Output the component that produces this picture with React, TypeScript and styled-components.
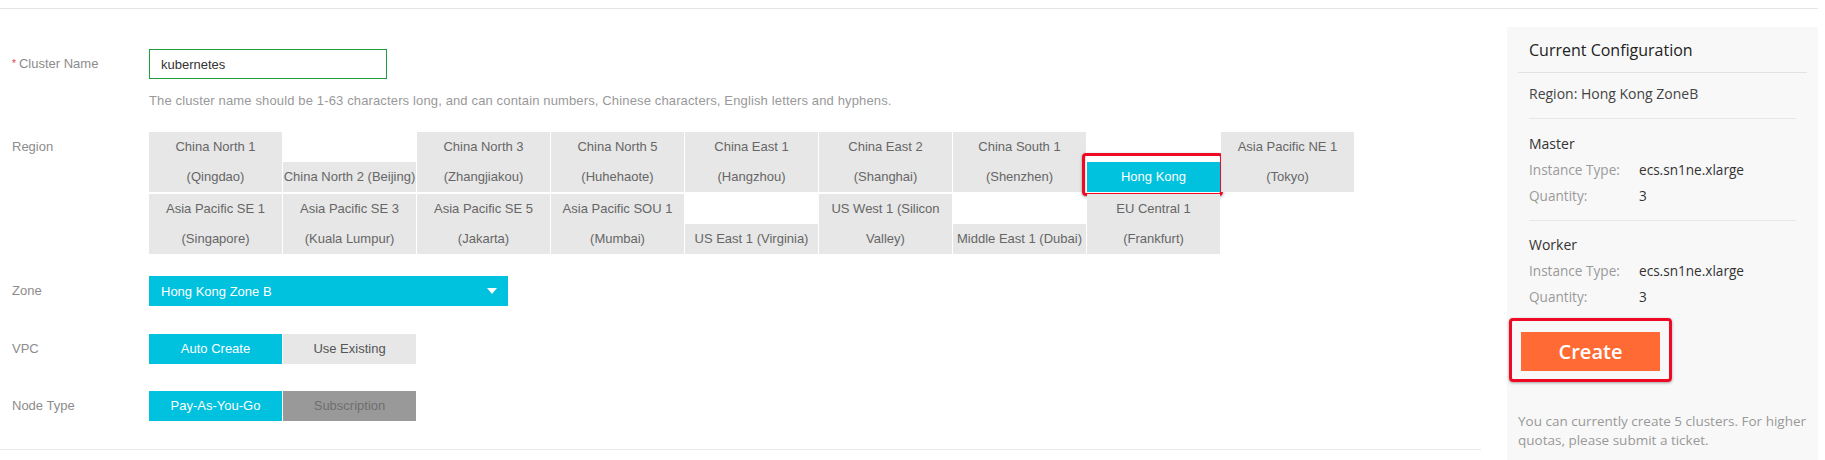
import styled, { createGlobalStyle } from "styled-components";

const GlobalStyle = createGlobalStyle`
  html, body {
    margin: 0;
    padding: 0;
    background: #fff;
  }
  body {
    font-family: "Liberation Sans", Arial, sans-serif;
    font-size: 13px;
  }
`;

const CYAN = "#00c1de";
const MARK = "#ee0a24";

type Region = { lines: string[]; active?: boolean };

const regions: Region[] = [
  { lines: ["China North 1", "(Qingdao)"] },
  { lines: ["China North 2 (Beijing)"] },
  { lines: ["China North 3", "(Zhangjiakou)"] },
  { lines: ["China North 5", "(Huhehaote)"] },
  { lines: ["China East 1", "(Hangzhou)"] },
  { lines: ["China East 2", "(Shanghai)"] },
  { lines: ["China South 1", "(Shenzhen)"] },
  { lines: ["Hong Kong"], active: true },
  { lines: ["Asia Pacific NE 1", "(Tokyo)"] },
  { lines: ["Asia Pacific SE 1", "(Singapore)"] },
  { lines: ["Asia Pacific SE 3", "(Kuala Lumpur)"] },
  { lines: ["Asia Pacific SE 5", "(Jakarta)"] },
  { lines: ["Asia Pacific SOU 1", "(Mumbai)"] },
  { lines: ["US East 1 (Virginia)"] },
  { lines: ["US West 1 (Silicon", "Valley)"] },
  { lines: ["Middle East 1 (Dubai)"] },
  { lines: ["EU Central 1", "(Frankfurt)"] },
];

const Page = styled.div`
  width: 1818px;
  padding-top: 8px;
`;

const Main = styled.div`
  display: flex;
  align-items: flex-start;
  border-top: 1px solid #e4e4e4;
`;

const Form = styled.div`
  width: 1481px;
  flex-shrink: 0;
  padding: 40px 0 28px;
  border-bottom: 1px solid #e8e8e8;
`;

const FieldRow = styled.div<{ $gap?: number }>`
  display: flex;
  align-items: flex-start;
  margin-top: ${(p) => p.$gap ?? 0}px;
`;

const Label = styled.div`
  width: 149px;
  box-sizing: border-box;
  padding-left: 12px;
  flex-shrink: 0;
  line-height: 30px;
  color: #8c8c8c;
  font-size: 13px;
`;

const Required = styled.span`
  color: #e4393c;
  font-size: 10px;
  margin-right: 3px;
  vertical-align: 1px;
`;

const Field = styled.div`
  display: flex;
  flex-direction: column;
`;

const TextInput = styled.input`
  width: 238px;
  height: 30px;
  box-sizing: border-box;
  border: 1px solid #1f9d3a;
  outline: none;
  padding: 0 11px;
  font-family: "Liberation Sans", Arial, sans-serif;
  font-size: 13px;
  color: #333;
  background: #fff;
`;

const Hint = styled.div`
  margin-top: 12px;
  line-height: 20px;
  color: #999;
  font-size: 13px;
  letter-spacing: 0.14px;
`;

const RegionGrid = styled.div`
  display: grid;
  grid-template-columns: repeat(9, 133px);
  grid-auto-rows: 60px;
  column-gap: 1px;
  row-gap: 2px;
  align-items: end;
`;

const RegionCell = styled.div<{ $active?: boolean }>`
  position: relative;
  background: ${(p) => (p.$active ? CYAN : "#e7e7e7")};
  color: ${(p) => (p.$active ? "#fff" : "#666")};
  line-height: 30px;
  text-align: center;
  font-size: 13px;
  cursor: pointer;

  ${(p) =>
    p.$active &&
    `
    &::after {
      content: "";
      position: absolute;
      top: -9px;
      left: -5px;
      right: -3px;
      bottom: -4px;
      border: 3px solid ${MARK};
      border-radius: 4px;
      box-shadow: 0 1px 3px rgba(0, 0, 0, 0.35);
      pointer-events: none;
    }
  `}
`;

const Line = styled.span`
  display: block;
  white-space: nowrap;
`;

const Select = styled.div`
  width: 359px;
  height: 30px;
  box-sizing: border-box;
  padding: 0 11px 0 12px;
  background: ${CYAN};
  color: #fff;
  display: flex;
  align-items: center;
  justify-content: space-between;
  font-size: 13px;
  cursor: pointer;
`;

const Segments = styled.div`
  display: flex;
  gap: 1px;
`;

const Segment = styled.div<{ $variant: "on" | "off" | "disabled" }>`
  width: 133px;
  height: 30px;
  line-height: 30px;
  text-align: center;
  font-size: 13px;
  background: ${(p) =>
    p.$variant === "on" ? CYAN : p.$variant === "off" ? "#e7e7e7" : "#999"};
  color: ${(p) =>
    p.$variant === "on" ? "#fff" : p.$variant === "off" ? "#555" : "#6f6f6f"};
  cursor: ${(p) => (p.$variant === "disabled" ? "not-allowed" : "pointer")};
`;

const Panel = styled.aside`
  width: 311px;
  flex-shrink: 0;
  margin: 18px 0 0 26px;
  min-height: 433px;
  background: #f8f8f8;
  font-family: "Open Sans", "Noto Sans", sans-serif;
  color: #333;
`;

const PanelHeader = styled.div`
  height: 45px;
  margin: 0 11px;
  padding-left: 11px;
  display: flex;
  align-items: center;
  border-bottom: 1px solid #e2e2e2;
  font-size: 16px;
  color: #222;
`;

const Section = styled.div<{ $top: number; $bottom: number; $last?: boolean }>`
  margin: 0 22px;
  padding: ${(p) => p.$top}px 0 ${(p) => p.$bottom}px;
  border-bottom: ${(p) => (p.$last ? "none" : "1px solid #e6e6e6")};
  font-size: 14px;
`;

const RegionLine = styled.div`
  line-height: 20px;
  color: #444;
`;

const Group = styled.div`
  line-height: 26px;
  color: #333;
`;

const Spec = styled.div`
  display: flex;
  line-height: 26px;
  font-size: 13.6px;
`;

const SpecKey = styled.span`
  width: 110px;
  color: #9a9a9a;
`;

const SpecValue = styled.span`
  color: #333;
`;

const ActionArea = styled.div`
  margin-top: 8px;
  padding-left: 2px;
`;

const Highlight = styled.div`
  display: inline-block;
  padding: 11px 9px 8px;
  border: 3px solid ${MARK};
  border-radius: 4px;
  box-shadow: 0 1px 3px rgba(0, 0, 0, 0.35);
`;

const CreateButton = styled.button`
  display: block;
  width: 139px;
  height: 39px;
  border: none;
  background: #ff6a35;
  color: #fff;
  font-family: "Open Sans", "Noto Sans", sans-serif;
  font-size: 20px;
  font-weight: 600;
  cursor: pointer;
`;

const Footnote = styled.p`
  margin: 30px 0 0;
  padding: 0 11px;
  font-size: 13.5px;
  line-height: 19px;
  color: #999;
`;

function Caret() {
  return (
    <svg width="10" height="6" viewBox="0 0 10 6">
      <polygon points="0,0 10,0 5,6" fill="#fff" />
    </svg>
  );
}

function SpecRow({ name, value }: { name: string; value: string }) {
  return (
    <Spec>
      <SpecKey>{name}</SpecKey>
      <SpecValue>{value}</SpecValue>
    </Spec>
  );
}

export default function App() {
  return (
    <>
      <GlobalStyle />
      <Page>
        <Main>
          <Form>
            <FieldRow>
              <Label>
                <Required>*</Required>Cluster Name
              </Label>
              <Field>
                <TextInput defaultValue="kubernetes" />
                <Hint>
                  The cluster name should be 1-63 characters long, and can contain numbers,
                  Chinese characters, English letters and hyphens.
                </Hint>
              </Field>
            </FieldRow>

            <FieldRow $gap={21}>
              <Label>Region</Label>
              <RegionGrid>
                {regions.map((r) => (
                  <RegionCell key={r.lines.join(" ")} $active={r.active}>
                    {r.lines.map((l) => (
                      <Line key={l}>{l}</Line>
                    ))}
                  </RegionCell>
                ))}
              </RegionGrid>
            </FieldRow>

            <FieldRow $gap={22}>
              <Label>Zone</Label>
              <Select>
                <span>Hong Kong Zone B</span>
                <Caret />
              </Select>
            </FieldRow>

            <FieldRow $gap={28}>
              <Label>VPC</Label>
              <Segments>
                <Segment $variant="on">Auto Create</Segment>
                <Segment $variant="off">Use Existing</Segment>
              </Segments>
            </FieldRow>

            <FieldRow $gap={27}>
              <Label>Node Type</Label>
              <Segments>
                <Segment $variant="on">Pay-As-You-Go</Segment>
                <Segment $variant="disabled">Subscription</Segment>
              </Segments>
            </FieldRow>
          </Form>

          <Panel>
            <PanelHeader>Current Configuration</PanelHeader>
            <Section $top={11} $bottom={14}>
              <RegionLine>Region: Hong Kong ZoneB</RegionLine>
            </Section>
            <Section $top={12} $bottom={11}>
              <Group>Master</Group>
              <SpecRow name="Instance Type:" value="ecs.sn1ne.xlarge" />
              <SpecRow name="Quantity:" value="3" />
            </Section>
            <Section $top={11} $bottom={0} $last>
              <Group>Worker</Group>
              <SpecRow name="Instance Type:" value="ecs.sn1ne.xlarge" />
              <SpecRow name="Quantity:" value="3" />
            </Section>
            <ActionArea>
              <Highlight>
                <CreateButton>Create</CreateButton>
              </Highlight>
            </ActionArea>
            <Footnote>
              You can currently create 5 clusters. For higher quotas, please submit a ticket.
            </Footnote>
          </Panel>
        </Main>
      </Page>
    </>
  );
}
